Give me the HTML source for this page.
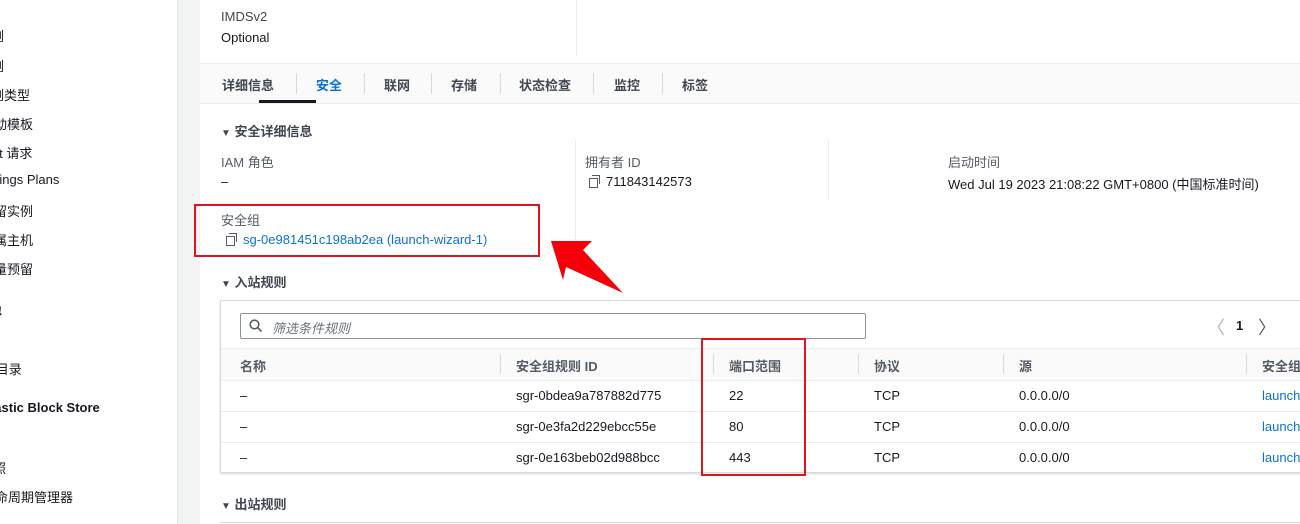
<!DOCTYPE html>
<html><head><meta charset="utf-8"><style>
*{margin:0;padding:0;box-sizing:border-box}
body{width:1300px;height:524px;overflow:hidden;background:#fff;font-family:"Liberation Sans","Noto Sans CJK SC",sans-serif;font-size:13px;color:#16191f;position:relative}
.a{position:absolute;white-space:nowrap}
.side{position:absolute;left:0;top:0;width:178px;height:524px;background:#fff;border-right:1px solid #e3e5e5;overflow:hidden}
.gap{position:absolute;left:178px;top:0;width:22px;height:524px;background:#f2f3f3}
.lbl{color:#545b64}
.blue{color:#0972d3}
.bold{font-weight:bold}
.tab{position:absolute;top:75px;font-weight:bold;color:#414750}
.sep{position:absolute;width:1px;background:#d5dbdb}
.copy{display:inline-block;width:11px;height:12px;position:relative;vertical-align:-1px;margin-right:6px}
.copy:before{content:"";position:absolute;left:0;top:3px;width:7px;height:8px;border:1.5px solid #545b64}
.copy:after{content:"";position:absolute;left:3px;top:0;width:7px;height:8px;border-top:1.5px solid #545b64;border-right:1.5px solid #545b64}
.row{position:absolute;left:221px;width:1079px;height:31px;border-top:1px solid #eaeded}
</style></head><body>
<div class="side">
<div class="a" style="left:-22px;top:26px">实例</div>
<div class="a" style="left:-22px;top:56px">实例</div>
<div class="a" style="left:-22px;top:85px">实例类型</div>
<div class="a" style="left:-19px;top:114px">启动模板</div>
<div class="a" style="left:-24px;top:143px">Spot 请求</div>
<div class="a" style="left:-23px;top:172px">Savings Plans</div>
<div class="a" style="left:-19px;top:201px">预留实例</div>
<div class="a" style="left:-19px;top:230px">专属主机</div>
<div class="a" style="left:-19px;top:259px">容量预留</div>
<div class="a bold" style="left:-24px;top:300px">映像</div>
<div class="a" style="left:-31px;top:359px">AMI 目录</div>
<div class="a bold" style="left:-18px;top:400px">Elastic Block Store</div>
<div class="a" style="left:-20px;top:458px">快照</div>
<div class="a" style="left:-18px;top:487px">生命周期管理器</div>
</div>
<div class="gap"></div>
<div class="a lbl" style="left:221px;top:9px;color:#414750">IMDSv2</div>
<div class="a" style="left:221px;top:30px">Optional</div>
<div class="sep" style="left:576px;top:0;height:56px;background:#eaeded"></div>
<div class="a" style="left:200px;top:63px;width:1100px;height:41px;background:#fafafa;border-top:1px solid #eaeded;border-bottom:1px solid #eaeded"></div>
<div class="tab" style="left:222px">详细信息</div>
<div class="tab blue" style="left:316px;color:#0972d3">安全</div>
<div class="tab" style="left:384px">联网</div>
<div class="tab" style="left:451px">存储</div>
<div class="tab" style="left:519px">状态检查</div>
<div class="tab" style="left:614px">监控</div>
<div class="tab" style="left:682px">标签</div>
<div class="sep" style="left:296px;top:73px;height:21px"></div>
<div class="sep" style="left:364px;top:73px;height:21px"></div>
<div class="sep" style="left:431px;top:73px;height:21px"></div>
<div class="sep" style="left:500px;top:73px;height:21px"></div>
<div class="sep" style="left:593px;top:73px;height:21px"></div>
<div class="sep" style="left:662px;top:73px;height:21px"></div>
<div class="a" style="left:259px;top:100px;width:57px;height:3px;background:#16191f"></div>
<div class="a bold" style="left:221px;top:121px;color:#414750"><span style="font-size:10px">▼</span> 安全详细信息</div>
<div class="a lbl" style="left:221px;top:152px">IAM 角色</div>
<div class="a" style="left:221px;top:174px">–</div>
<div class="a lbl" style="left:221px;top:210px">安全组</div>
<div class="a blue" style="left:226px;top:232px"><span class="copy"></span>sg-0e981451c198ab2ea (launch-wizard-1)</div>
<div class="sep" style="left:575px;top:140px;height:100px;background:#eaeded"></div>
<div class="a lbl" style="left:585px;top:152px">拥有者 ID</div>
<div class="a" style="left:589px;top:174px"><span class="copy"></span>711843142573</div>
<div class="sep" style="left:828px;top:140px;height:60px;background:#eaeded"></div>
<div class="a lbl" style="left:948px;top:152px">启动时间</div>
<div class="a" style="left:948px;top:174px">Wed Jul 19 2023 21:08:22 GMT+0800 (中国标准时间)</div>
<div class="a" style="left:194px;top:204px;width:346px;height:53px;border:2px solid #e0141e"></div>
<div class="a bold" style="left:221px;top:272px;color:#414750"><span style="font-size:10px">▼</span> 入站规则</div>
<div class="a" style="left:220px;top:300px;width:1090px;height:173px;border:1px solid #d5dbdb;box-shadow:0 1px 2px rgba(0,0,0,.15)"></div>
<div class="a" style="left:240px;top:313px;width:626px;height:26px;border:1px solid #879596;border-radius:2px"></div>
<svg class="a" style="left:249px;top:319px" width="14" height="14" viewBox="0 0 14 14"><circle cx="5.5" cy="5.5" r="4.3" fill="none" stroke="#545b64" stroke-width="1.6"/><path d="M8.7 8.7L12.5 12.5" stroke="#545b64" stroke-width="1.6"/></svg>
<div class="a" style="left:272px;top:318px;color:#687078;font-style:italic">筛选条件规则</div>
<div class="a" style="left:1207px;top:314px;color:#aab7b8;font-size:18px">〈</div>
<div class="a bold" style="left:1236px;top:318px">1</div>
<div class="a" style="left:1258px;top:314px;color:#545b64;font-size:18px">〉</div>
<div class="a" style="left:221px;top:348px;width:1079px;height:32px;background:#fafafa;border-top:1px solid #eaeded"></div>
<div class="a bold" style="left:240px;top:356px;color:#545b64">名称</div>
<div class="a bold" style="left:516px;top:356px;color:#545b64">安全组规则 ID</div>
<div class="a bold" style="left:729px;top:356px;color:#545b64">端口范围</div>
<div class="a bold" style="left:874px;top:356px;color:#545b64">协议</div>
<div class="a bold" style="left:1019px;top:356px;color:#545b64">源</div>
<div class="a bold" style="left:1262px;top:356px;color:#545b64">安全组</div>
<div class="sep" style="left:500px;top:354px;height:20px"></div>
<div class="sep" style="left:713px;top:354px;height:20px"></div>
<div class="sep" style="left:858px;top:354px;height:20px"></div>
<div class="sep" style="left:1003px;top:354px;height:20px"></div>
<div class="sep" style="left:1246px;top:354px;height:20px"></div>
<div class="row" style="top:380px"></div>
<div class="row" style="top:411px"></div>
<div class="row" style="top:442px"></div>
<div class="a" style="left:240px;top:388px">–</div><div class="a" style="left:516px;top:388px">sgr-0bdea9a787882d775</div><div class="a" style="left:729px;top:388px">22</div><div class="a" style="left:874px;top:388px">TCP</div><div class="a" style="left:1019px;top:388px">0.0.0.0/0</div><div class="a blue" style="left:1262px;top:388px">launch</div>
<div class="a" style="left:240px;top:419px">–</div><div class="a" style="left:516px;top:419px">sgr-0e3fa2d229ebcc55e</div><div class="a" style="left:729px;top:419px">80</div><div class="a" style="left:874px;top:419px">TCP</div><div class="a" style="left:1019px;top:419px">0.0.0.0/0</div><div class="a blue" style="left:1262px;top:419px">launch</div>
<div class="a" style="left:240px;top:450px">–</div><div class="a" style="left:516px;top:450px">sgr-0e163beb02d988bcc</div><div class="a" style="left:729px;top:450px">443</div><div class="a" style="left:874px;top:450px">TCP</div><div class="a" style="left:1019px;top:450px">0.0.0.0/0</div><div class="a blue" style="left:1262px;top:450px">launch</div>
<div class="a" style="left:701px;top:338px;width:105px;height:138px;border:2px solid #e0141e"></div>
<div class="a bold" style="left:221px;top:494px;color:#414750"><span style="font-size:10px">▼</span> 出站规则</div>
<div class="a" style="left:220px;top:522px;width:1080px;height:2px;border-top:1px solid #d5dbdb"></div>
<svg class="a" style="left:0;top:0" width="1300" height="524"><polygon points="551,241 592,241 583,250 623,293 566,267 563,280" fill="#f5000a"/></svg>
</body></html>
